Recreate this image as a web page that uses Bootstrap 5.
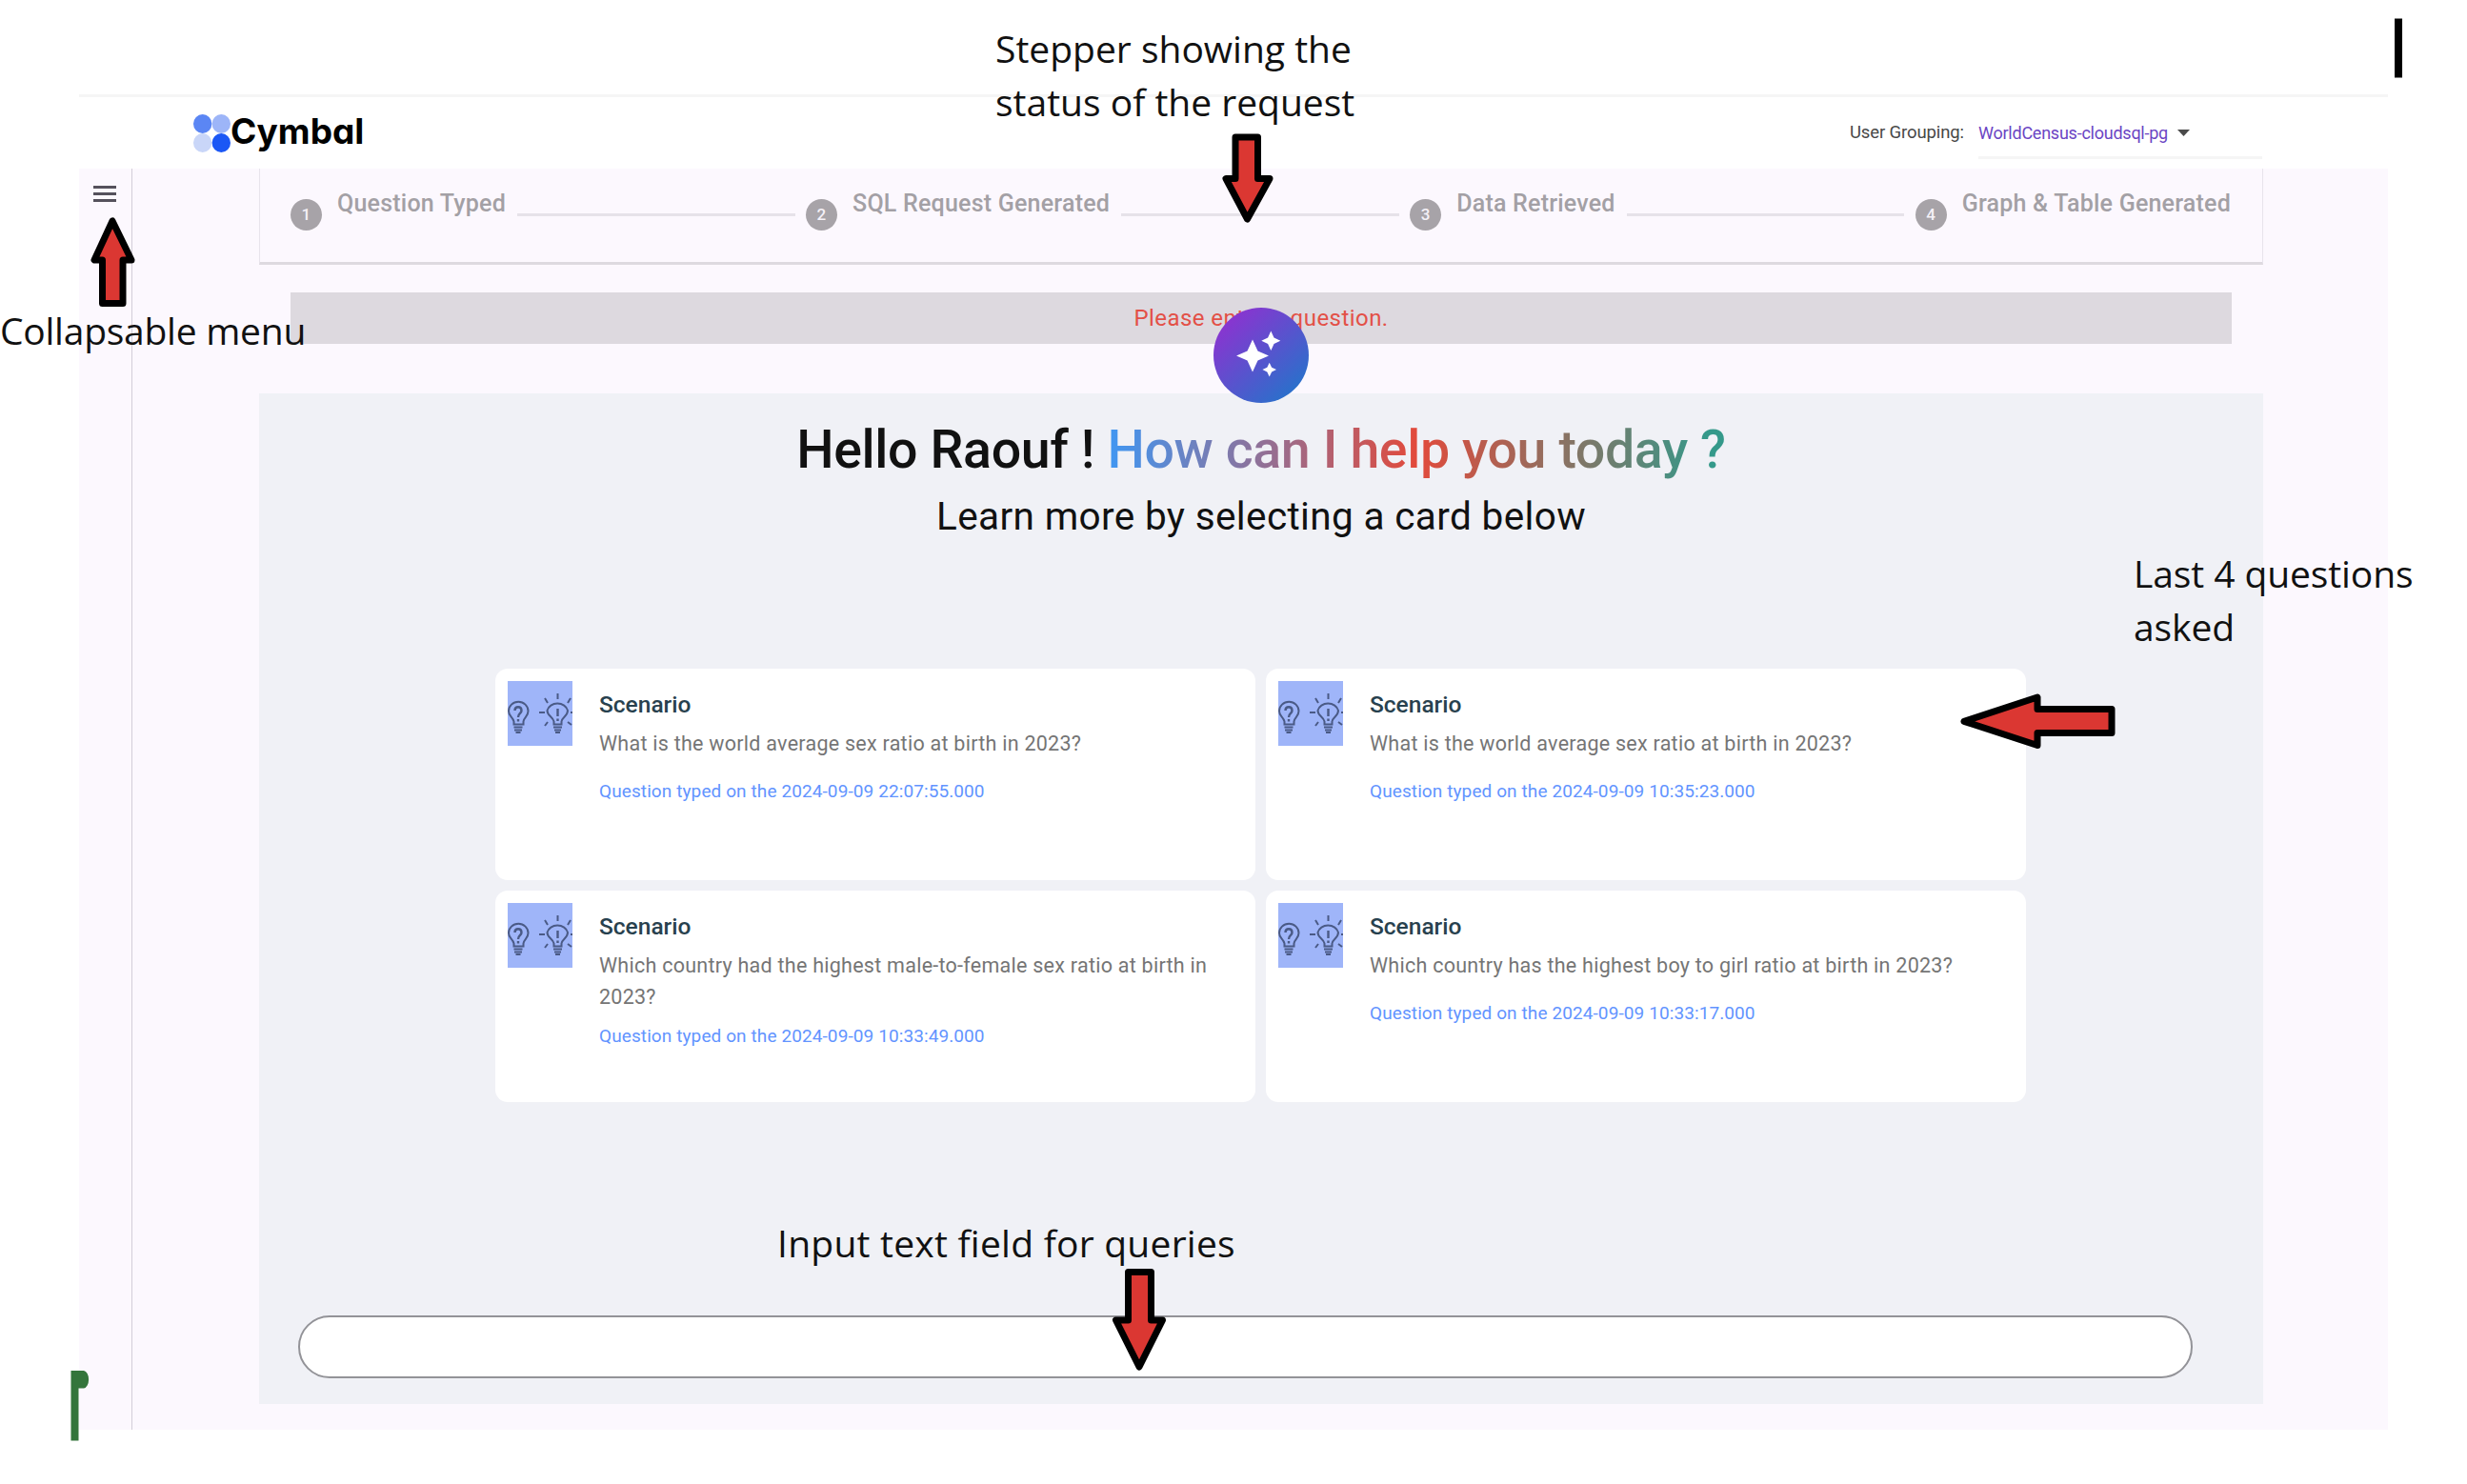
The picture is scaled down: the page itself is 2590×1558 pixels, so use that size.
<!DOCTYPE html>
<html lang="en">
<head>
<meta charset="utf-8">
<title>Cymbal</title>
<link href="https://cdn.jsdelivr.net/npm/bootstrap@5.3.0/dist/css/bootstrap.min.css" rel="stylesheet">
<style>
body{font-family:Roboto,sans-serif;background:#fff;color:#111;width:2590px;height:1558px;overflow:hidden;position:relative}
.app{margin:99px 83px 0 83px;width:2424px;height:1402px}
.app-header{height:78px;border-top:3px solid #f5f5f5;padding:0 132px 0 120px}
.brand-name{font:700 37px/36px Inter,sans-serif;font-feature-settings:"cv11";color:#000;padding-bottom:3px}
.group-label{font-size:18.5px;letter-spacing:-.11px;color:#484848;margin-right:15px}
.group-select{width:298px;height:54px;border-bottom:3px solid #f5f5f5;padding-top:2px;font-size:18px;letter-spacing:-.24px;color:#6b45c4;gap:10px}
.app-body{background:#fcf8fe}
.side{width:56px;border-right:1px solid #d3ced8;padding:18px 0 0 15px}
.main-col{padding:0 131px 0 133px}
.stepper{height:101px;border:1px solid #e8e4ec;border-top:0;border-bottom:3px solid #dedae0;padding:0 33px 0 32px;font-weight:500;font-size:25px;letter-spacing:.22px;color:#a3a0a5}
.dot{width:33px;height:33px;border-radius:50%;background:#a7a3a8;color:#f5f1f7;font-size:17px;margin:32px 16px 0 0}
.step-label{margin-top:21px;line-height:32px;white-space:nowrap}
.rail{height:3px;background:#e6e2e9;margin:47px 11.5px 0 12px}
.notice{margin:29px 33px 0 33px;height:54px;background:#ddd9df;color:#e35047;font-size:24px;letter-spacing:.45px}
.panel{margin-top:52px;height:1061px;background:#f0f1f6}
.orb{width:100px;height:100px;left:1274px;top:322.500px}
.hello{font-size:55.5px;letter-spacing:-.4px;font-weight:500;line-height:66px;padding-top:27px;white-space:nowrap}
.rainbow{background:linear-gradient(90deg,#3f97f3 0%,#e24a3b 50%,#34998a 97%);-webkit-background-clip:text;background-clip:text;color:transparent}
.sub{font-size:40.5px;letter-spacing:.36px;line-height:48px;margin-top:12px}
.deck{display:grid;grid-template-columns:798px 798px;gap:11px;margin:136px 0 0 248px}
.scenario{height:222px;border-radius:13px;background:#fff;padding:13px;gap:28px}
.scenario h5{font-size:24.5px;line-height:30px;font-weight:500;color:#28414e;margin:10px 0 0}
.ask{font-size:21.5px;letter-spacing:.26px;line-height:33px;min-height:42px;margin-top:9px;color:#757575}
.when{font-size:19px;letter-spacing:.1px;line-height:24px;color:#6294ff;margin-top:13px}
.query{margin:224px 0 0 41px;width:1989px;height:66px;border:2px solid #939398;border-radius:33px;background:#fff}
.note{position:absolute;font-family:"Open Sans",sans-serif;font-size:39px;line-height:56px;color:#111;white-space:nowrap}
.note-stepper{left:1045px;top:23px}
.note-menu{left:0;top:319px;letter-spacing:-.25px}
.note-cards{left:2240px;top:574px;letter-spacing:-.1px}
.note-input{left:816px;top:1277px;letter-spacing:.24px}
.overlay{position:absolute;left:0;top:0;pointer-events:none}
</style>
</head>
<body>
<svg width="0" height="0" class="position-absolute"><defs>
<symbol id="idea" viewBox="0 0 68 68"><rect width="68" height="68" fill="#9fb5f9"/><g fill="none" stroke="#4a5a86" stroke-width="2"><path d="M6.500 45.500v-3C5 37 1 37 1 31.500a10 9.500 0 0 1 20.500 0c0 5.500-4 6-5 11v3z"/><path d="M6.500 48.500h9M7 51.500h8M8.500 54h5"/><path d="M48.500 45.500v-3c-1-5-7-6-7-11.500a11 9.500 0 0 1 21.500 0c0 6-6 7-6.500 11.500v3z"/><path d="M48 48.500h9M49 51.500h7M50 54h5M52.500 13v6M33 33h6M66 33h2M39 18l3 5M66 18l-3 5M42 43l-3 4M63 43l4 3"/><path stroke-width="2.400" d="M52.500 29v8M52.500 39.500v2.500M7.500 31c0-5 7-5 7 0 0 3-3.500 3-3.500 7M11 40v2.500"/></g></symbol>
</defs></svg>
<div class="app d-flex flex-column">
<header class="app-header d-flex align-items-center justify-content-between">
<div class="d-flex align-items-center"><svg width="39" height="40" viewBox="0 0 39 40"><ellipse cx="9.700" cy="10" rx="9.700" ry="10" fill="#5b86f4"/><ellipse cx="29.300" cy="10" rx="9.700" ry="10" fill="#9db5f8"/><ellipse cx="9.700" cy="30" rx="9.700" ry="10" fill="#c9d6f8"/><ellipse cx="29.300" cy="30" rx="9.700" ry="10" fill="#1b57f5"/></svg><span class="brand-name">Cymbal</span></div>
<div class="d-flex align-items-center"><span class="group-label">User Grouping:</span><div class="group-select d-flex align-items-center"><span>WorldCensus-cloudsql-pg</span><svg width="13" height="7"><path d="M0 0h13L6.500 7z" fill="#4a4a4a"/></svg></div></div>
</header>
<div class="app-body d-flex flex-grow-1">
<nav class="side"><svg width="24" height="18" class="d-block"><path d="M0 1.500h24M0 8.500h24M0 15.500h24" stroke="#55515c" stroke-width="2.800"/></svg></nav>
<main class="main-col flex-grow-1">
<section class="stepper d-flex align-items-start">
<span class="dot d-flex align-items-center justify-content-center">1</span><span class="step-label">Question Typed</span><i class="rail flex-grow-1"></i>
<span class="dot d-flex align-items-center justify-content-center">2</span><span class="step-label">SQL Request Generated</span><i class="rail flex-grow-1"></i>
<span class="dot d-flex align-items-center justify-content-center">3</span><span class="step-label">Data Retrieved</span><i class="rail flex-grow-1"></i>
<span class="dot d-flex align-items-center justify-content-center">4</span><span class="step-label">Graph &amp; Table Generated</span>
</section>
<div class="notice d-flex align-items-center justify-content-center">Please enter a question.</div>
<section class="panel">
<h1 class="hello text-center mb-0">Hello Raouf ! <span class="rainbow">How can I help you today ?</span></h1>
<p class="sub text-center mb-0">Learn more by selecting a card below</p>
<div class="deck">
<article class="scenario d-flex"><svg width="68" height="68" class="flex-shrink-0"><use href="#idea"/></svg><div><h5>Scenario</h5><div class="ask">What is the world average sex ratio at birth in 2023?</div><div class="when">Question typed on the 2024-09-09 22:07:55.000</div></div></article>
<article class="scenario d-flex"><svg width="68" height="68" class="flex-shrink-0"><use href="#idea"/></svg><div><h5>Scenario</h5><div class="ask">What is the world average sex ratio at birth in 2023?</div><div class="when">Question typed on the 2024-09-09 10:35:23.000</div></div></article>
<article class="scenario d-flex"><svg width="68" height="68" class="flex-shrink-0"><use href="#idea"/></svg><div><h5>Scenario</h5><div class="ask">Which country had the highest male-to-female sex ratio at birth in 2023?</div><div class="when">Question typed on the 2024-09-09 10:33:49.000</div></div></article>
<article class="scenario d-flex"><svg width="68" height="68" class="flex-shrink-0"><use href="#idea"/></svg><div><h5>Scenario</h5><div class="ask">Which country has the highest boy to girl ratio at birth in 2023?</div><div class="when">Question typed on the 2024-09-09 10:33:17.000</div></div></article>
</div>
<div class="query"></div>
</section>
</main>
</div>
</div>
<svg class="orb position-absolute" viewBox="0 0 100 100"><defs><linearGradient id="og" x1=".15" y1=".12" x2=".85" y2=".88"><stop offset="0" stop-color="#8a34d0"/><stop offset="1" stop-color="#2a70cb"/></linearGradient></defs><circle cx="50" cy="50" r="50" fill="url(#og)"/><path fill="#fff" d="M41 33.500l5.500 12 11.500 5-11.500 5-5.500 12-5.500-12-11.500-5 11.500-5zM60.300 24.500l3.200 7 6.800 3.200-6.800 3.200-3.200 7.100-3.200-7.100-6.800-3.200 6.800-3.200zM58.700 57.700l2.400 5 4.900 2.400-4.900 2.400-2.400 5-2.400-5-4.900-2.400 4.900-2.400z"/></svg>
<div class="note note-stepper">Stepper showing the<br>status of the request</div>
<div class="note note-menu">Collapsable menu</div>
<div class="note note-cards">Last 4 questions<br>asked</div>
<div class="note note-input">Input text field for queries</div>
<svg class="overlay" width="2590" height="1558" viewBox="0 0 2590 1558"><g fill="#db3732" stroke="#000" stroke-width="7" stroke-linejoin="round"><path d="M118 232L99 273H107.500V318.500H129V273H138z"/><path d="M1297 144H1320.500V187.500H1333L1309.500 230L1287 187.500H1297z"/><path d="M2062 757.300L2139 732V744.500H2217V769.500H2139V782.500z"/><path d="M1184.500 1335.500H1208.500V1386H1220.500L1196 1435L1171.500 1386H1184.500z"/></g><rect x="2514" y="19.500" width="8" height="62"/><path fill="#34753b" d="M74.500 1439H88a5.700 9.300 0 0 1 0 18.500H82.500V1512.500H74.500z"/></svg>
<script src="https://cdn.jsdelivr.net/npm/bootstrap@5.3.0/dist/js/bootstrap.bundle.min.js"></script>
</body>
</html>
